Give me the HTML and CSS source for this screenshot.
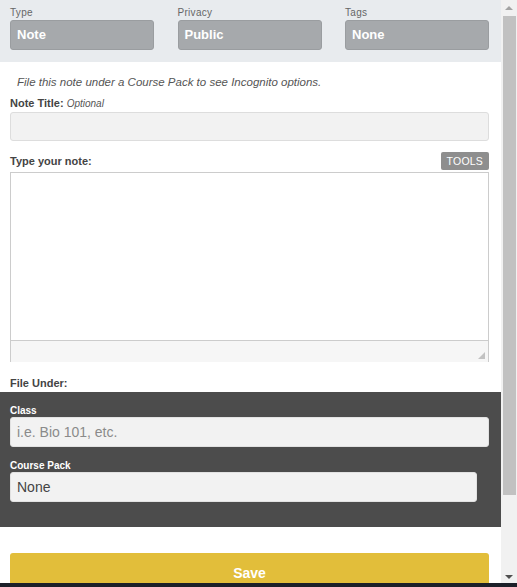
FILE: index.html
```html
<!DOCTYPE html>
<html lang="en">
<head>
  <meta charset="utf-8">
  <title>New note</title>
  <link rel="stylesheet" href="styles.css">
</head>
<body>
  <div class="frame">
    <form class="panel">
      <div class="meta">
        <div class="meta__col">
          <span class="meta__label">Type</span>
          <div class="meta__box">Note</div>
        </div>
        <div class="meta__col">
          <span class="meta__label">Privacy</span>
          <div class="meta__box">Public</div>
        </div>
        <div class="meta__col">
          <span class="meta__label">Tags</span>
          <div class="meta__box">None</div>
        </div>
      </div>

      <div class="body">
        <p class="hint">File this note under a Course Pack to see Incognito options.</p>

        <label class="label">Note Title: <em class="label__opt">Optional</em></label>
        <div class="field field--title"></div>

        <div class="note-head">
          <label class="label">Type your note:</label>
          <button type="button" class="tools">TOOLS</button>
        </div>
        <div class="editor">
          <div class="editor__area"></div>
          <div class="editor__foot"><span class="editor__grip"></span></div>
        </div>

        <p class="label label--under">File Under:</p>
      </div>

      <div class="file-under">
        <label class="label label--light">Class</label>
        <div class="field field--dark field--placeholder">i.e. Bio 101, etc.</div>

        <label class="label label--light label--pack">Course Pack</label>
        <div class="field field--dark field--short">None</div>
      </div>

      <div class="actions">
        <button type="button" class="save">Save</button>
      </div>
    </form>

    <div class="scrollbar">
      <span class="scrollbar__btn"><span class="scrollbar__up"></span></span>
      <span class="scrollbar__thumb"></span>
      <span class="scrollbar__btn scrollbar__btn--down"><span class="scrollbar__down"></span></span>
    </div>
  </div>
  <div class="taskbar"></div>
</body>
</html>
```

FILE: styles.css
```css
*, *::before, *::after {
  margin: 0;
  padding: 0;
  box-sizing: border-box;
}

html, body {
  height: 100%;
}

body {
  display: flex;
  flex-direction: column;
  overflow: hidden;
  background: #ffffff;
  font-family: "Liberation Sans", Arial, sans-serif;
  color: #444444;
}

.frame {
  display: flex;
  height: 583px;
  overflow: hidden;
}

.taskbar {
  flex: 1;
  background: #1c2029;
}

.panel {
  flex: 1;
  min-width: 0;
  overflow: hidden;
}

/* Верхняя полоса: тип, приватность, теги */
.meta {
  display: grid;
  grid-template-columns: repeat(3, 1fr);
  column-gap: 23.5px;
  padding: 6px 12px 12px 10px;
  background: #e8ebee;
}

.meta__label {
  display: block;
  margin-bottom: 1px;
  font-size: 10px;
  line-height: 13px;
  letter-spacing: .3px;
  color: #666666;
}

.meta__box {
  height: 30px;
  padding: 0 6px;
  border: 1px solid #9a9da0;
  border-radius: 3px;
  background: #a6a9ac;
  font-size: 13px;
  font-weight: 700;
  line-height: 28px;
  color: #ffffff;
}

.body {
  padding: 12px 12px 0 10px;
}

.hint {
  padding-left: 7px;
  font-size: 11.5px;
  font-style: italic;
  line-height: 16px;
  color: #555555;
}

.label {
  display: block;
  margin-top: 6px;
  font-size: 11px;
  font-weight: 700;
  line-height: 14px;
  color: #444444;
}

.label__opt {
  font-weight: 400;
  font-size: 10px;
  color: #555555;
}

.field {
  height: 30px;
  margin-top: 1px;
  padding: 0 6px;
  border: 1px solid #dddddd;
  border-radius: 3px;
  background: #f2f2f2;
  font-size: 14px;
  line-height: 28px;
  color: #444444;
}

.field--title {
  height: 29px;
}

.note-head {
  display: flex;
  align-items: flex-end;
  justify-content: space-between;
  margin-top: 11px;
}

.note-head .label {
  margin: 0 0 2px;
}

.tools {
  height: 18px;
  padding: 0 6px;
  border: none;
  border-radius: 2px;
  background: #8e8e8e;
  font-family: inherit;
  font-size: 10.5px;
  font-weight: 400;
  letter-spacing: .2px;
  color: #ffffff;
}

.editor {
  margin-top: 2px;
}

.editor__area {
  height: 169px;
  border: 1px solid #cccccc;
  background: #ffffff;
}

.editor__foot {
  display: flex;
  justify-content: flex-end;
  align-items: flex-end;
  height: 21px;
  padding: 0 3px 3px 0;
  border: 1px solid #cccccc;
  border-width: 0 1px;
  background: #f6f6f6;
}

.editor__grip {
  width: 0;
  height: 0;
  border-left: 7px solid transparent;
  border-bottom: 7px solid #c2c2c2;
}

.label--under {
  margin: 14px 0 2px;
}

/* Тёмный блок «File Under» */
.file-under {
  padding: 12px 12px 25px 10px;
  background: #4c4c4c;
}

.label--light {
  margin: 0;
  font-size: 10px;
  line-height: 13px;
  color: #ffffff;
}

.label--pack {
  margin-top: 12px;
}

.field--dark {
  margin-top: 0;
  border-color: #e2e2e2;
}

.field--placeholder {
  color: #8a8a8a;
}

.field--short {
  margin-right: 12px;
}

.actions {
  padding: 26px 12px 0 10px;
}

.save {
  display: block;
  width: 100%;
  height: 40px;
  border: none;
  border-radius: 3px;
  background: #e2be3a;
  font-family: inherit;
  font-size: 14px;
  font-weight: 700;
  color: #ffffff;
}

/* Полоса прокрутки окна */
.scrollbar {
  display: flex;
  flex-direction: column;
  width: 16px;
  background: #f1f1f1;
}

.scrollbar__btn {
  display: flex;
  align-items: center;
  justify-content: center;
  height: 16px;
}

.scrollbar__btn--down {
  margin-top: auto;
  align-items: flex-end;
  padding-bottom: 4px;
}

.scrollbar__up {
  border: 4px solid transparent;
  border-top: 0;
  border-bottom-color: #a3a3a3;
}

.scrollbar__down {
  border: 4px solid transparent;
  border-bottom: 0;
  border-top-color: #505050;
}

.scrollbar__thumb {
  height: 479px;
  margin: 0 1px 0 2px;
  background: #c1c1c1;
}
```
